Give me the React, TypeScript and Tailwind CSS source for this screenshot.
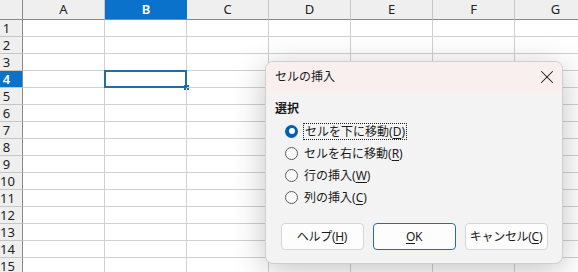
import { X } from 'lucide-react';

const COLS = ['A', 'B', 'C', 'D', 'E', 'F', 'G'];
const ROWS = Array.from({ length: 15 }, (_, i) => i + 1);

const font = 'font-["Noto_Sans","Noto_Sans_CJK_JP",sans-serif]';

function Radio({ checked }: { checked?: boolean }) {
  if (checked) {
    return (
      <span className="flex h-[13px] w-[13px] shrink-0 items-center justify-center rounded-full bg-[#005fb8]">
        <span className="h-[6px] w-[6px] rounded-full bg-white" />
      </span>
    );
  }
  return (
    <span className="h-[13px] w-[13px] shrink-0 rounded-full border border-[#5c5c5c] bg-[#f9f9f9]" />
  );
}

function Option({
  label,
  accel,
  checked,
}: {
  label: string;
  accel: string;
  checked?: boolean;
}) {
  return (
    <div className="ml-[10px] flex h-[22px] items-center gap-[5px]">
      <Radio checked={checked} />
      <span
        className={
          checked
            ? 'border border-dotted border-[#222] px-px leading-[15px]'
            : 'px-px leading-[15px]'
        }
      >
        {label}(<span className="underline underline-offset-2">{accel}</span>)
      </span>
    </div>
  );
}

function Button({
  children,
  primary,
}: {
  children: React.ReactNode;
  primary?: boolean;
}) {
  return (
    <button
      type="button"
      className={
        'flex h-[27px] w-[83px] items-center justify-center rounded-[4px] border bg-[#fdfdfd] text-[12px] tracking-[-0.3px] text-[#1b1b1b] ' +
        (primary ? 'border-[#2a6d9c]' : 'border-[#d6d6d6]')
      }
    >
      {children}
    </button>
  );
}

export default function App() {
  return (
    <div className={`relative h-[272px] w-[578px] overflow-hidden bg-white ${font}`}>
      <div className="grid grid-cols-[23px_repeat(7,82px)]">
        <div className="h-[20px] border-r border-b border-[#8a8a8a] bg-[#efefef]" />
        {COLS.map((c) => (
          <div
            key={c}
            className={
              'flex h-[20px] items-center justify-center border-b border-[#8a8a8a] text-[13px] ' +
              (c === 'B'
                ? 'bg-[#0b72cc] font-semibold text-white'
                : 'border-r border-r-[#c6c6c6] bg-[#efefef] text-[#222]')
            }
          >
            {c}
          </div>
        ))}
        {ROWS.map((r) => (
          <div key={r} className="contents">
            <div
              className={
                'h-[17px] border-r border-b border-r-[#8a8a8a] border-b-[#c6c6c6] text-[13px] leading-[16px] ' +
                (r === 4 ? 'bg-[#0b72cc] font-semibold text-white' : 'bg-[#efefef] text-[#222]')
              }
            >
              <div className="w-[13px] text-center">{r}</div>
            </div>
            {COLS.map((c) => (
              <div
                key={c}
                className="relative h-[17px] border-r border-b border-[#d0d0d0]"
              >
                {r === 4 && c === 'B' && (
                  <>
                    <div className="absolute -top-px -left-px h-[18px] w-[83px] border-2 border-[#1f6fa5]" />
                    <div className="absolute -right-[3px] -bottom-[3px] h-[5px] w-[5px] bg-[#1f6fa5]" />
                  </>
                )}
              </div>
            ))}
          </div>
        ))}
      </div>

      <div className="absolute top-[61px] left-[265px] flex h-[203px] w-[298px] flex-col overflow-hidden rounded-[8px] border border-[#cfcfcf] bg-[#f3f3f3] text-[12px] text-[#1b1b1b] shadow-[0_6px_32px_rgba(0,0,0,0.24)]">
        <div className="flex h-[30px] shrink-0 items-center justify-between bg-[#f9efef] pr-[4px] pl-[9px]">
          <span>セルの挿入</span>
          <X className="h-[22px] w-[22px] text-[#1b1b1b]" strokeWidth={1.1} />
        </div>
        <div className="flex flex-col px-[9px] pt-[9px]">
          <div className="font-bold leading-[16px]">選択</div>
          <div className="mt-[3px] flex flex-col">
            <Option label="セルを下に移動" accel="D" checked />
            <Option label="セルを右に移動" accel="R" />
            <Option label="行の挿入" accel="W" />
            <Option label="列の挿入" accel="C" />
          </div>
        </div>
        <div className="mt-[15px] flex justify-center gap-[9px]">
          <Button>
            ヘルプ(<span className="underline underline-offset-2">H</span>)
          </Button>
          <Button primary>
            <span className="underline underline-offset-2">O</span>K
          </Button>
          <Button>
            キャンセル(<span className="underline underline-offset-2">C</span>)
          </Button>
        </div>
      </div>
    </div>
  );
}
